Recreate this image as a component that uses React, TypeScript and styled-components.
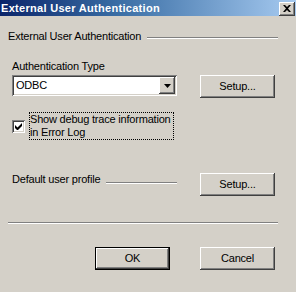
import * as React from 'react';
import styled, { createGlobalStyle } from 'styled-components';

const GlobalStyle = createGlobalStyle`
  html, body {
    margin: 0;
    padding: 0;
    background: #d4d0c8;
  }
  body {
    font-family: "Liberation Sans", Arial, sans-serif;
    font-size: 11px;
    color: #000;
  }
`;

const raised = `
  box-shadow: inset -1px -1px #404040, inset 1px 1px #ffffff,
    inset -2px -2px #808080, inset 2px 2px #d4d0c8;
`;

const Window = styled.div`
  width: 296px;
  height: 292px;
  background: #d4d0c8;
  display: flex;
  flex-direction: column;
  overflow: hidden;
`;

const TitleBar = styled.div`
  height: 16px;
  display: flex;
  align-items: center;
  justify-content: space-between;
  background: linear-gradient(to right, #0a246a 0%, #3a6ea5 40%, #a6caf0 100%);
  padding-right: 1px;
`;

const TitleText = styled.span`
  color: #fff;
  font-weight: bold;
  font-size: 11px;
  line-height: 13px;
  letter-spacing: 0.3px;
  padding-left: 1px;
  white-space: nowrap;
`;

const CloseButton = styled.div`
  width: 16px;
  height: 14px;
  background: #d4d0c8;
  ${raised}
  display: flex;
  align-items: center;
  justify-content: center;
  margin-top: 1px;
`;

const Body = styled.div`
  padding: 0 18px 0 8px;
  display: flex;
  flex-direction: column;
  letter-spacing: -0.2px;
`;

const GroupHeader = styled.div`
  display: flex;
  align-items: flex-start;
  margin-top: 14px;
  line-height: 13px;
`;

const EtchedLine = styled.div<{ $gap?: number }>`
  flex: 1;
  height: 0;
  border-top: 1px solid #808080;
  border-bottom: 1px solid #ffffff;
  margin-left: ${p => p.$gap ?? 0}px;
`;

const HeaderLine = styled(EtchedLine)`
  margin-top: 7px;
`;

const Group = styled.div`
  padding: 0 3px 0 4px;
  display: flex;
  flex-direction: column;
`;

const FieldLabel = styled.div`
  margin-top: 17px;
  line-height: 13px;
`;

const Row = styled.div<{ $top: number }>`
  display: grid;
  grid-template-columns: 165px 75px;
  column-gap: 23px;
  align-items: start;
  margin-top: ${p => p.$top}px;
`;

const Combo = styled.div`
  height: 21px;
  box-sizing: border-box;
  background: #fff;
  box-shadow: inset 1px 1px #808080, inset -1px -1px #ffffff,
    inset 2px 2px #404040, inset -2px -2px #d4d0c8;
  padding: 2px;
  display: flex;
  align-items: stretch;
`;

const ComboValue = styled.span`
  flex: 1;
  padding-left: 2px;
  line-height: 17px;
`;

const ComboArrow = styled.div`
  width: 16px;
  background: #d4d0c8;
  ${raised}
  display: flex;
  align-items: center;
  justify-content: center;
`;

const Button = styled.div<{ $default?: boolean }>`
  width: 75px;
  height: 23px;
  box-sizing: border-box;
  background: #d4d0c8;
  display: flex;
  align-items: center;
  justify-content: center;
  line-height: 13px;
  ${p =>
    p.$default
      ? `border: 1px solid #000;
         box-shadow: inset -1px -1px #404040, inset 1px 1px #ffffff,
           inset -2px -2px #808080, inset 2px 2px #d4d0c8;`
      : raised}
`;

const CheckRow = styled.div`
  display: flex;
  align-items: flex-start;
  gap: 4px;
  margin-top: 14px;
`;

const CheckBox = styled.div`
  width: 13px;
  height: 13px;
  box-sizing: border-box;
  margin-top: 8px;
  background: #fff;
  box-shadow: inset 1px 1px #808080, inset -1px -1px #ffffff,
    inset 2px 2px #404040, inset -2px -2px #d4d0c8;
  display: flex;
  align-items: center;
  justify-content: center;
`;

const FocusText = styled.div`
  border: 1px dotted #000;
  padding: 0 2px 0 0;
  line-height: 13px;
  white-space: nowrap;
`;

const ProfileLabel = styled.div`
  display: flex;
  align-items: flex-start;
  line-height: 13px;
`;

const ProfileLine = styled(EtchedLine)`
  margin-top: 9px;
`;

const Separator = styled(EtchedLine)`
  flex: none;
  margin-top: 26px;
`;

const Footer = styled.div`
  display: flex;
  justify-content: flex-end;
  gap: 30px;
  padding-right: 3px;
  margin-top: 23px;
`;

export default function App() {
  return (
    <>
      <GlobalStyle />
      <Window>
        <TitleBar>
          <TitleText>External User Authentication</TitleText>
          <CloseButton>
            <svg width="8" height="7" viewBox="0 0 8 7">
              <path d="M0 0h2l2 2 2-2h2L5 3.5 8 7H6L4 5 2 7H0l3-3.5z" fill="#000" />
            </svg>
          </CloseButton>
        </TitleBar>
        <Body>
          <GroupHeader>
            <span>External User Authentication</span>
            <HeaderLine $gap={6} />
          </GroupHeader>
          <Group>
            <FieldLabel>Authentication Type</FieldLabel>
            <Row $top={2}>
              <Combo>
                <ComboValue>ODBC</ComboValue>
                <ComboArrow>
                  <svg width="7" height="4" viewBox="0 0 7 4">
                    <path d="M0 0h7L3.5 4z" fill="#000" />
                  </svg>
                </ComboArrow>
              </Combo>
              <Button>Setup...</Button>
            </Row>
            <CheckRow>
              <CheckBox>
                <svg width="7" height="7" viewBox="0 0 7 7">
                  <path d="M0 2v3l2 2h1l4-4V0L2.5 4.5z" fill="#000" />
                </svg>
              </CheckBox>
              <FocusText>
                Show debug trace information
                <br />
                in Error Log
              </FocusText>
            </CheckRow>
            <Row $top={33}>
              <ProfileLabel>
                <span>Default user profile</span>
                <ProfileLine $gap={6} />
              </ProfileLabel>
              <Button>Setup...</Button>
            </Row>
          </Group>
          <Separator />
          <Footer>
            <Button $default>OK</Button>
            <Button>Cancel</Button>
          </Footer>
        </Body>
      </Window>
    </>
  );
}
